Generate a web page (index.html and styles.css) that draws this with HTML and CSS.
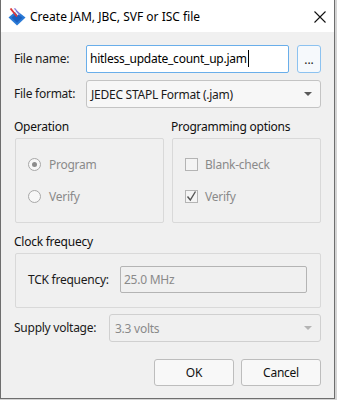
FILE: index.html
```html
<!DOCTYPE html>
<html lang="en">
<head>
    <meta charset="UTF-8">
    <title>Create JAM, JBC, SVF or ISC file</title>
    <link rel="stylesheet" href="styles.css">
</head>
<body>

<div class="window">
    <div class="titlebar">
        <svg class="app-icon" width="18" height="18" viewBox="0 0 18 18">
            <path d="M0.5 9.5 L8.5 2.5 L17.5 9.5 L9 17.5 Z" fill="#2a7ad6"/>
            <path d="M3.5 9.8 L8.5 5.5 L14.5 9.8 L9 14.8 Z" fill="#1b5fbf"/>
            <path d="M2.5 0.5 L9 8.5" stroke="#e03838" stroke-width="1.9"/>
            <path d="M4.8 0.3 L10.2 7" stroke="#fafafa" stroke-width="1.2"/>
            <path d="M6.5 0.3 L11.8 6.6" stroke="#8b7ddb" stroke-width="1.3"/>
        </svg>
        <span class="title">Create JAM, JBC, SVF or ISC file</span>
        <svg class="close" width="12" height="12" viewBox="0 0 12 12">
            <path d="M0.5 0.5 L11.5 11.5 M11.5 0.5 L0.5 11.5" stroke="#111" stroke-width="1.1"/>
        </svg>
    </div>

    <div class="content">
        <div class="row">
            <span class="label name-label">File name:</span>
            <div class="field focused">hitless_update_count_up.jam<span class="caret"></span></div>
            <div class="browse">...</div>
        </div>

        <div class="row format-row">
            <span class="label name-label">File format:</span>
            <div class="select">
                <span>JEDEC STAPL Format (.jam)</span>
                <span class="arrow"></span>
            </div>
        </div>

        <div class="groups">
            <div class="group">
                <div class="heading">Operation</div>
                <div class="box">
                    <div class="option"><span class="radio checked"></span>Program</div>
                    <div class="option"><span class="radio"></span>Verify</div>
                </div>
            </div>
            <div class="group">
                <div class="heading">Programming options</div>
                <div class="box">
                    <div class="option"><span class="check"></span>Blank-check</div>
                    <div class="option">
                        <span class="check">
                            <svg width="11" height="11" viewBox="0 0 11 11">
                                <path d="M1.5 5.5 L4.3 9 L9.5 0.5" fill="none" stroke="#555" stroke-width="1.4"/>
                            </svg>
                        </span>Verify
                    </div>
                </div>
            </div>
        </div>

        <div class="heading clock-heading">Clock frequecy</div>
        <div class="box clock-box">
            <span class="label tck-label">TCK frequency:</span>
            <div class="field disabled">25.0 MHz</div>
        </div>

        <div class="row supply-row">
            <span class="label supply-label">Supply voltage:</span>
            <div class="select disabled">
                <span>3.3 volts</span>
                <span class="arrow"></span>
            </div>
        </div>

        <div class="buttons">
            <div class="btn">OK</div>
            <div class="btn">Cancel</div>
        </div>
    </div>
</div>

</body>
</html>
```

FILE: styles.css
```css
body {
    margin: 0;
    background-color: #d4d4d4;
    font-family: "Noto Sans", sans-serif;
    font-size: 12px;
    color: #1a1a1a;
}
.window {
    width: 333px;
    height: 398px;
    border: 1px solid #6e6e6e;
    border-top: none;
    background-color: #f0f0f0;
}
.titlebar {
    height: 32px;
    background-color: #ffffff;
    display: flex;
    align-items: center;
}
.app-icon {
    margin-left: 7px;
    margin-top: 1px;
}
.title {
    margin-left: 4px;
    flex: 1;
    font-size: 12px;
    color: #000;
}
.close {
    margin-right: 8px;
    margin-top: 1px;
}
.content {
    padding: 13px 13px 0 13px;
    letter-spacing: -0.25px;
}
.row {
    display: flex;
    align-items: center;
}
.label {
    line-height: 16px;
}
.name-label {
    width: 72px;
}
.field {
    height: 26px;
    line-height: 26px;
    border: 1px solid #b4b4b4;
    border-radius: 2px;
    background-color: #ffffff;
    padding: 0 3px;
    box-sizing: content-box;
}
.field.focused {
    width: 195px;
    border-color: #69aeea;
    color: #000;
}
.caret {
    display: inline-block;
    width: 1px;
    height: 17px;
    background-color: #000;
    vertical-align: -4px;
    margin-left: 1px;
}
.field.disabled {
    width: 179px;
    height: 25px;
    line-height: 25px;
    background-color: #f0f0f0;
    color: #8a8a8a;
    padding: 0 3px;
}
.browse {
    margin-left: 8px;
    width: 22px;
    height: 26px;
    line-height: 28px;
    text-align: center;
    border: 1px solid #8cc2f0;
    border-radius: 3px;
    background-color: #f6f9fc;
    letter-spacing: 0;
}
.format-row {
    margin-top: 7px;
}
.select {
    flex: 1;
    height: 26px;
    border: 1px solid #c4c4c4;
    border-radius: 3px;
    background-color: #f7f7f7;
    display: flex;
    align-items: center;
    justify-content: space-between;
    padding: 0 8px 0 4px;
}
.select.disabled {
    color: #8a8a8a;
    background-color: #f0f0f0;
    border-color: #d0d0d0;
    padding-left: 5px;
}
.arrow {
    width: 0;
    height: 0;
    border-left: 4px solid transparent;
    border-right: 4px solid transparent;
    border-top: 4px solid #5a5a5a;
}
.select.disabled .arrow {
    border-top-color: #b4b4b4;
}
.groups {
    display: flex;
    gap: 7px;
    margin-top: 11px;
}
.group {
    width: 150px;
}
.heading {
    line-height: 16px;
    color: #111;
    margin-bottom: 3px;
}
.box {
    margin-left: 1px;
    border: 1px solid #d9d9d9;
    border-radius: 2px;
    padding: 17px 12px 0 12px;
    height: 66px;
}
.option {
    display: flex;
    align-items: center;
    height: 16px;
    color: #8a8a8a;
    margin-bottom: 16px;
}
.radio {
    width: 11px;
    height: 11px;
    border: 1px solid #a8a8a8;
    border-radius: 50%;
    background-color: #f7f7f7;
    margin-right: 8px;
    position: relative;
}
.radio.checked::after {
    content: "";
    position: absolute;
    left: 3px;
    top: 3px;
    width: 5px;
    height: 5px;
    border-radius: 50%;
    background-color: #8c8c8c;
}
.check {
    width: 11px;
    height: 11px;
    border: 1px solid #b4b4b4;
    background-color: #f4f4f4;
    margin-right: 7px;
    display: flex;
}
.clock-heading {
    margin-top: 11px;
}
.clock-box {
    display: flex;
    align-items: center;
    height: auto;
    padding: 12px 13px 14px 12px;
}
.tck-label {
    width: 92px;
}
.supply-row {
    margin-top: 6px;
}
.supply-label {
    width: 95px;
}
.buttons {
    display: flex;
    justify-content: flex-end;
    gap: 7px;
    margin-top: 17px;
}
.btn {
    width: 78px;
    height: 25px;
    line-height: 25px;
    text-align: center;
    border: 1px solid #bdbdbd;
    border-radius: 3px;
    background-color: #f8f8f8;
    color: #111;
}
```
